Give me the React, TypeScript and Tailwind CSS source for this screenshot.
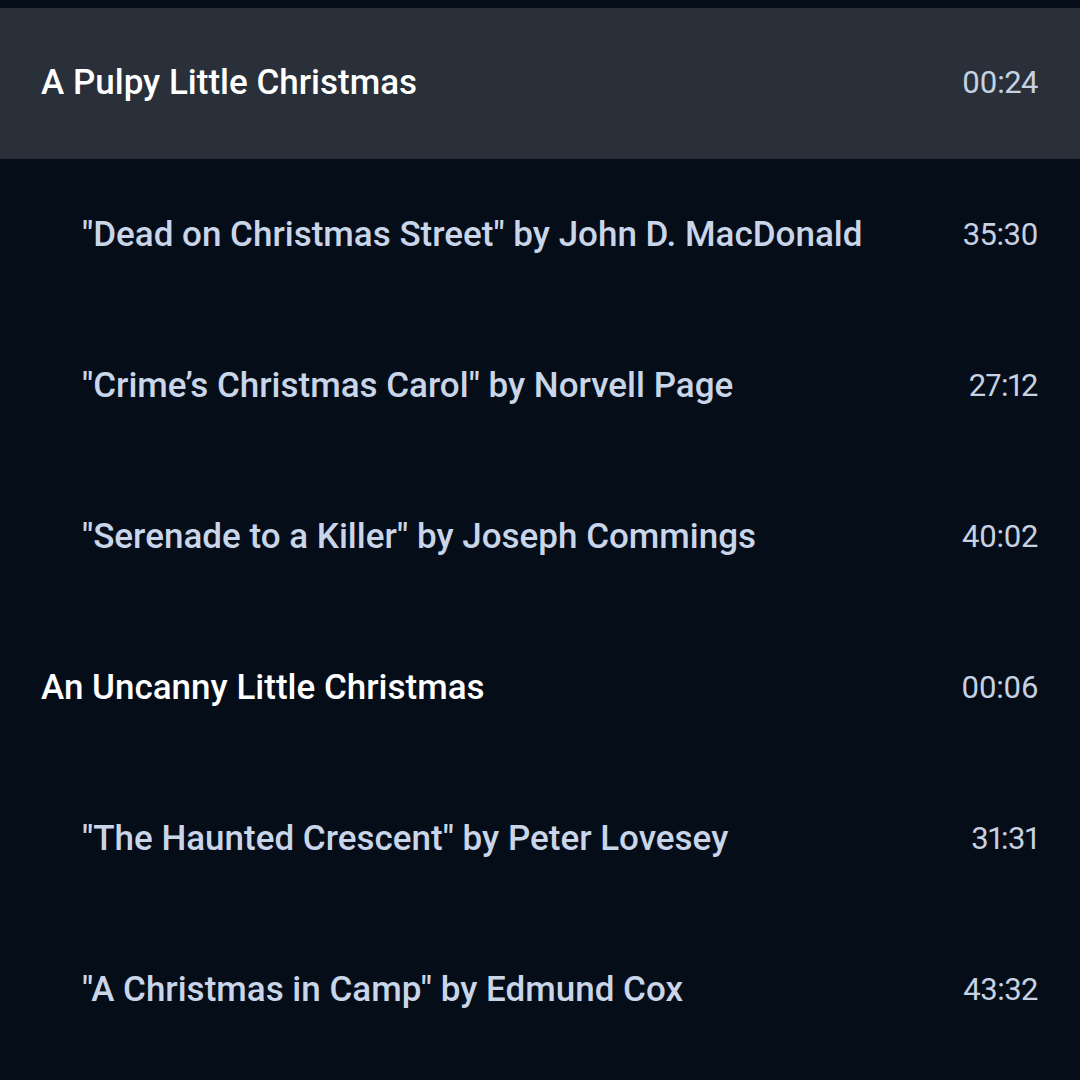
const rows = [
  { title: "A Pulpy Little Christmas", time: "00:24", header: true, active: true },
  { title: "\"Dead on Christmas Street\" by John D. MacDonald", time: "35:30" },
  { title: "\"Crime’s Christmas Carol\" by Norvell Page", time: "27:12" },
  { title: "\"Serenade to a Killer\" by Joseph Commings", time: "40:02" },
  { title: "An Uncanny Little Christmas", time: "00:06", header: true },
  { title: "\"The Haunted Crescent\" by Peter Lovesey", time: "31:31" },
  { title: "\"A Christmas in Camp\" by Edmund Cox", time: "43:32" },
];

export default function App() {
  return (
    <div
      className="w-[1080px] h-[1080px] overflow-hidden bg-[#050d18] pt-2"
      style={{ fontFamily: "Roboto, 'Liberation Sans', sans-serif" }}
    >
      {rows.map((r) => (
        <div
          key={r.title}
          className={
            "flex items-center justify-between h-[151.2px] pr-[42px] " +
            (r.active ? "bg-[#29303a] " : "") +
            (r.header ? "pl-[41px]" : "pl-[82px]")
          }
        >
          <span
            className={
              "text-[35px] font-medium " +
              (r.header ? "text-white" : "text-[#c9d5e8]")
            }
          >
            {r.title}
          </span>
          <span className="text-[31px] text-[#c6d1e2] tracking-[-0.5px] proportional-nums">{r.time}</span>
        </div>
      ))}
    </div>
  );
}
